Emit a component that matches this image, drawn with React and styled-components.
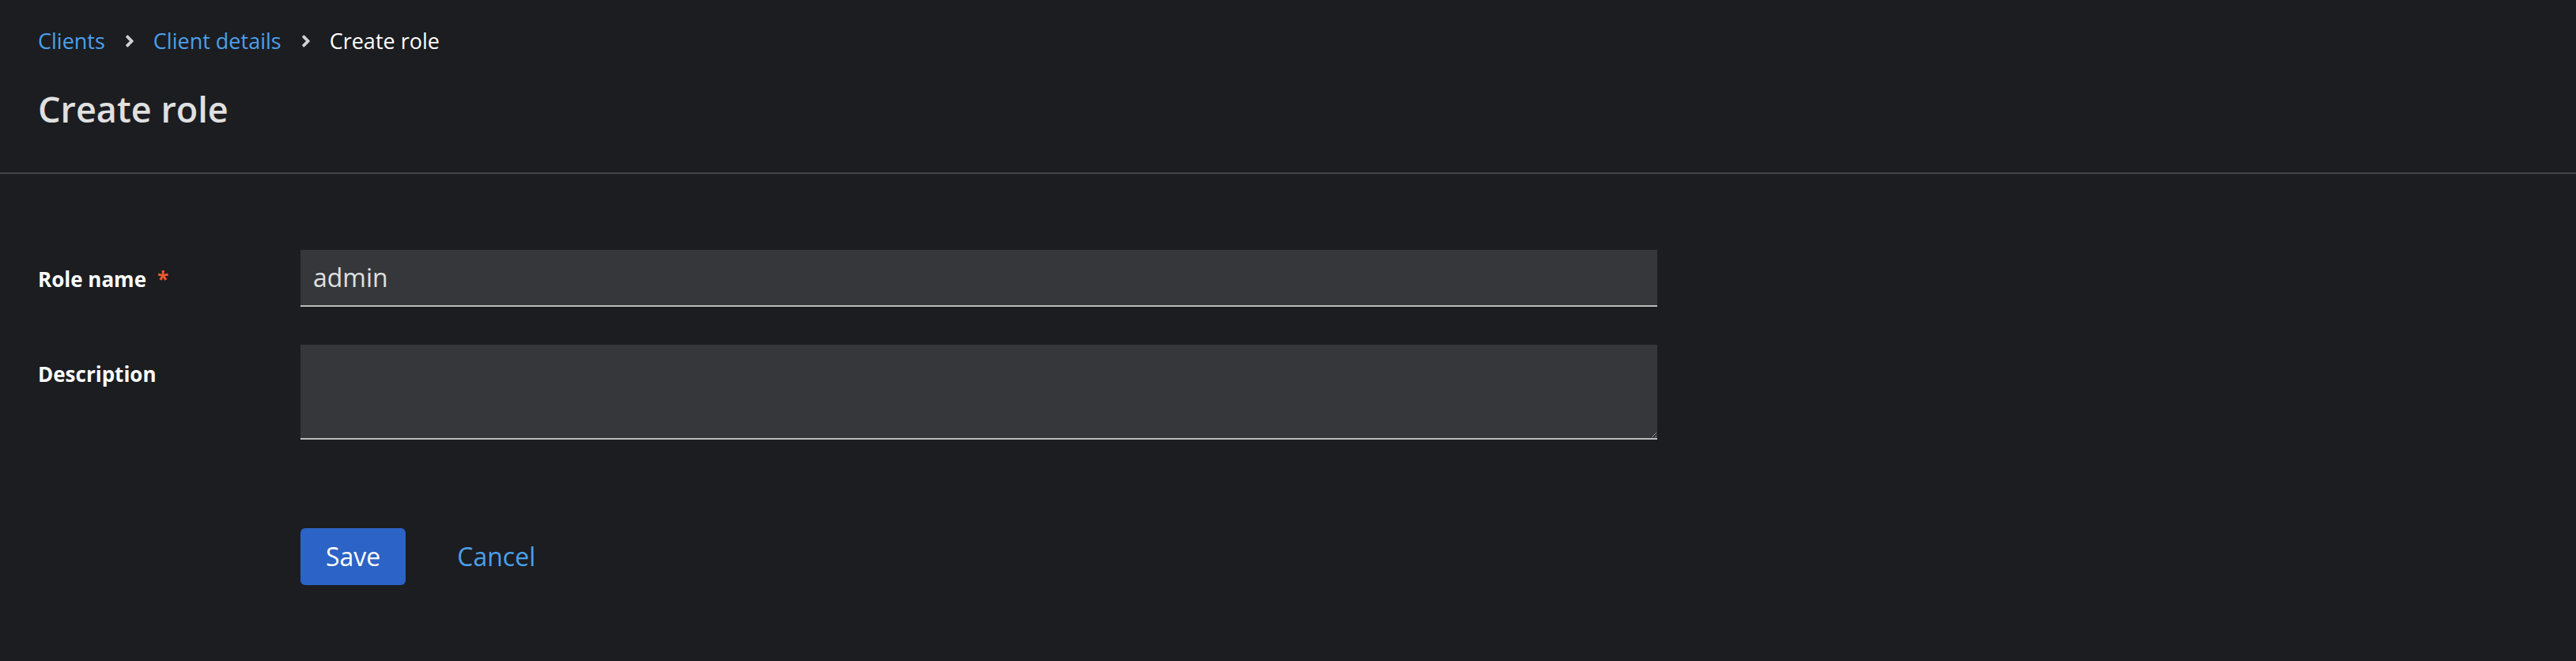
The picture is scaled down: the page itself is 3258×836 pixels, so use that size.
import React from "react";
import styled, { createGlobalStyle } from "styled-components";

const GlobalStyle = createGlobalStyle`
  html, body {
    margin: 0;
    padding: 0;
    background: #1b1d21;
    color-scheme: dark;
  }
  body {
    font-family: "Open Sans", "Liberation Sans", sans-serif;
    color: #e0e0e0;
  }
  * { box-sizing: border-box; }
`;

const Page = styled.div`
  background: #1b1d21;
`;

const Header = styled.header`
  padding: 31px 48px 51px;
  border-bottom: 2px solid #444548;
  display: flex;
  flex-direction: column;
  gap: 36px;
`;

const Breadcrumb = styled.nav`
  display: flex;
  align-items: center;
  font-size: 27px;
  line-height: 42px;
`;

const Crumb = styled.a`
  color: ${(p) => (p.$current ? "#ffffff" : "#4ca0ea")};
  text-decoration: none;
  white-space: nowrap;
`;

const Sep = styled.svg`
  width: 12px;
  height: 24px;
  margin: 0 24px 0 25px;
  fill: #d2d2d2;
  flex: none;
`;

const Title = styled.h1`
  margin: 0;
  font-size: 45px;
  line-height: 57.6px;
  font-weight: 600;
  color: #e0e0e0;
`;

const Section = styled.section`
  padding: 96px 48px 40px;
`;

const Form = styled.form`
  display: grid;
  grid-template-columns: 300px 1fr;
  column-gap: 32px;
  row-gap: 48px;
  max-width: 2048px;
`;

const Label = styled.label`
  font-size: 26px;
  line-height: 42px;
  font-weight: 700;
  color: #ffffff;
  padding-top: 16px;
`;

const Required = styled.span`
  color: #f0582e;
  margin-left: 14px;
`;

const Input = styled.input`
  height: 72px;
  width: 100%;
  padding: 0 16px;
  background: #36373a;
  border: none;
  border-bottom: 2px solid #bcbcbc;
  color: #e0e0e0;
  font-family: inherit;
  font-size: 32px;
  outline: none;
`;

const TextArea = styled.textarea`
  height: 120px;
  width: 100%;
  padding: 12px 16px;
  background: #36373a;
  border: none;
  border-bottom: 2px solid #bcbcbc;
  color: #e0e0e0;
  font-family: inherit;
  font-size: 32px;
  outline: none;
  resize: both;
  display: block;
`;

const Actions = styled.div`
  grid-column: 2;
  margin-top: 64px;
  display: flex;
  align-items: center;
`;

const Button = styled.button`
  height: 72px;
  padding: 0 32px;
  border: none;
  border-radius: 6px;
  font-family: inherit;
  font-size: 32px;
  cursor: pointer;
  background: ${(p) => (p.$variant === "primary" ? "#2c63c6" : "transparent")};
  color: ${(p) => (p.$variant === "primary" ? "#ffffff" : "#4ca0ea")};
  margin-right: ${(p) => (p.$variant === "primary" ? "33px" : "0")};
`;

const Chevron = () => (
  <Sep viewBox="0 0 256 512" aria-hidden="true">
    <path d="M224.3 273l-136 136c-9.4 9.4-24.6 9.4-33.9 0l-22.6-22.6c-9.4-9.4-9.4-24.6 0-33.9l96.4-96.4-96.4-96.4c-9.4-9.4-9.4-24.6 0-33.9L54.3 103c9.4-9.4 24.6-9.4 33.9 0l136 136c9.5 9.4 9.5 24.6.1 34z" />
  </Sep>
);

export default function App() {
  return (
    <Page>
      <GlobalStyle />
      <Header>
        <Breadcrumb>
          <Crumb href="#">Clients</Crumb>
          <Chevron />
          <Crumb href="#">Client details</Crumb>
          <Chevron />
          <Crumb $current>Create role</Crumb>
        </Breadcrumb>
        <Title>Create role</Title>
      </Header>
      <Section>
        <Form onSubmit={(e) => e.preventDefault()}>
          <Label htmlFor="role-name">
            Role name<Required>*</Required>
          </Label>
          <Input id="role-name" defaultValue="admin" />
          <Label htmlFor="description">Description</Label>
          <TextArea id="description" />
          <Actions>
            <Button type="submit" $variant="primary">Save</Button>
            <Button type="button" $variant="link">Cancel</Button>
          </Actions>
        </Form>
      </Section>
    </Page>
  );
}
